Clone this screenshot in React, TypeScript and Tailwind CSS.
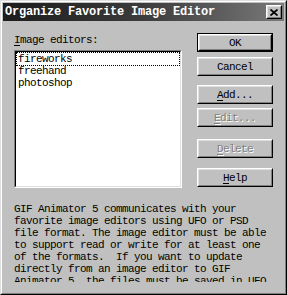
const lines = [
  "GIF Animator 5 communicates with your",
  "favorite image editors using UFO or PSD",
  "file format. The image editor must be able",
  "to support read or write for at least one",
  "of the formats.  If you want to update",
  "directly from an image editor to GIF",
  "Animator 5, the files must be saved in UFO",
];

const editors = ["fireworks", "freehand", "photoshop"];

interface ButtonProps {
  label: React.ReactNode;
  primary?: boolean;
  disabled?: boolean;
  className?: string;
}

function WinButton({ label, primary, disabled, className = "" }: ButtonProps) {
  const face = (
    <div className="flex-1 flex border border-t-white border-l-white border-r-black border-b-black">
      <div
        className={
          "flex-1 flex items-center justify-center border border-t-[#dfdfdf] border-l-[#dfdfdf] border-r-[#808080] border-b-[#808080] leading-[12px] " +
          (disabled ? "text-[#808080] [text-shadow:1px_1px_0_#ffffff]" : "text-black")
        }
      >
        {label}
      </div>
    </div>
  );
  return (
    <div className={"w-[76px] h-[19px] flex " + (primary ? "border border-black " : "") + className}>
      {face}
    </div>
  );
}

function U({ children }: { children: React.ReactNode }) {
  return <span className="underline underline-offset-[2px]">{children}</span>;
}

export default function App() {
  return (
    <div className="w-[287px] h-[295px] overflow-hidden bg-[#c0c0c0] font-['Liberation_Mono',monospace] text-[11px] tracking-[-0.6px] text-black border border-t-[#dfdfdf] border-l-[#dfdfdf] border-r-black border-b-black">
      <div className="h-full flex flex-col p-px border border-t-white border-l-white border-r-[#808080] border-b-[#808080]">
        {/* title bar */}
        <div className="h-[18px] shrink-0 flex items-center justify-between pl-[2px] pr-[2px] bg-gradient-to-r from-[#1c1c1c] via-[#3c3c3c] to-[#7a7a7a]">
          <span className="text-white font-bold text-[12px] tracking-[-0.2px] leading-[18px]">
            Organize Favorite Image Editor
          </span>
          <div className="w-[16px] h-[14px] flex border border-t-white border-l-white border-r-black border-b-black">
            <div className="flex-1 flex items-center justify-center bg-[#c0c0c0] border border-t-[#dfdfdf] border-l-[#dfdfdf] border-r-[#808080] border-b-[#808080]">
              <svg width="8" height="7" viewBox="0 0 8 7">
                <path d="M0.5 0.5 L7.5 6.5 M7.5 0.5 L0.5 6.5" stroke="#000" strokeWidth="1.7" fill="none" />
              </svg>
            </div>
          </div>
        </div>

        {/* body */}
        <div className="flex items-start pt-[12px] pl-[11px]">
          <div className="w-[168px] pt-[1px]">
            <div className="leading-[12px] h-[12px]">
              <U>I</U>mage editors:
            </div>
            <div className="mt-[4px] h-[138px] border border-t-[#808080] border-l-[#808080] border-r-white border-b-white">
              <div className="h-full bg-white border border-t-black border-l-black border-r-[#dfdfdf] border-b-[#dfdfdf] pt-[1px]">
                {editors.map((e, i) => (
                  <div
                    key={e}
                    className={
                      "mx-[1px] h-[12px] leading-[12px] pl-[1px] " +
                      (i === 0 ? "outline-1 outline-dotted outline-black" : "")
                    }
                  >
                    {e}
                  </div>
                ))}
              </div>
            </div>
          </div>

          <div className="ml-[15px] flex flex-col">
            <WinButton primary label="OK" />
            <WinButton label="Cancel" className="mt-[5px]" />
            <WinButton label={<><U>A</U>dd...</>} className="mt-[9px]" />
            <WinButton disabled label={<><U>E</U>dit...</>} className="mt-[4px]" />
            <WinButton disabled label={<><U>D</U>elete</>} className="mt-[12px]" />
            <WinButton label={<><U>H</U>elp</>} className="mt-[10px]" />
          </div>
        </div>

        {/* description */}
        <div className="mt-[15px] ml-[11px] h-[79px] overflow-hidden">
          {lines.map((l) => (
            <div key={l} className="h-[12px] leading-[12px] whitespace-pre">
              {l}
            </div>
          ))}
        </div>
      </div>
    </div>
  );
}
